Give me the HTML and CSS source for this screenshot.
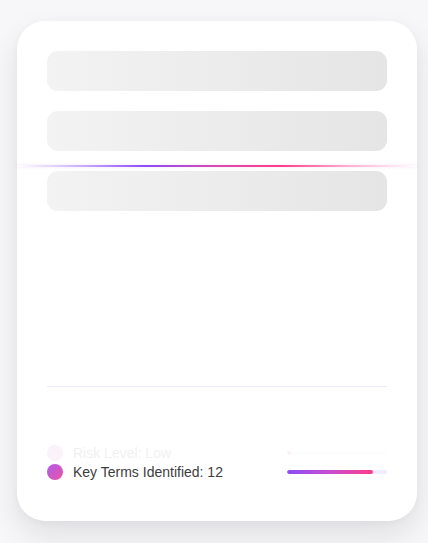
FILE: index.html
```html
<!DOCTYPE html>
<html>
<head>
<meta charset="utf-8">
<link rel="stylesheet" href="styles.css">
</head>
<body>
<div class="card">
  <div class="skeletons">
    <div class="skel"></div>
    <div class="skel"></div>
    <div class="skel"></div>
  </div>
  <div class="scanline"></div>
  <div class="divider"></div>
  <div class="rows">
    <div class="row faded">
      <span class="dot"></span>
      <span class="label">Risk Level: Low</span>
      <span class="track"><span class="fill" style="width:4%"></span></span>
    </div>
    <div class="row">
      <span class="dot"></span>
      <span class="label">Key Terms Identified: 12</span>
      <span class="track"><span class="fill" style="width:86%"></span></span>
    </div>
  </div>
</div>
</body>
</html>
```
FILE: styles.css
```css
html, body {
  margin: 0;
  padding: 0;
}
body {
  background: #f7f7f9;
  width: 428px;
  height: 543px;
  overflow: hidden;
  font-family: "Liberation Sans", Arial, sans-serif;
  padding-top: 21px;
  padding-left: 17px;
  box-sizing: border-box;
}
.card {
  position: relative;
  width: 400px;
  height: 500px;
  box-sizing: border-box;
  padding: 30px;
  background: #fff;
  border-radius: 28px;
  box-shadow: 0 14px 30px rgba(20, 20, 40, 0.1), 0 2px 8px rgba(20, 20, 40, 0.03);
  display: flex;
  flex-direction: column;
}
.skeletons {
  display: flex;
  flex-direction: column;
  gap: 20px;
}
.skel {
  height: 40px;
  border-radius: 11px;
  background: linear-gradient(90deg, #f3f3f4 0%, #e5e5e5 100%);
}
.scanline {
  position: absolute;
  left: 0;
  right: 0;
  top: 144px;
  height: 2px;
  background: linear-gradient(90deg, rgba(139, 92, 246, 0) 0%, rgba(139, 92, 246, 0.45) 15%, #8b4cf6 32%, #d84bb0 50%, #ff3d8a 66%, rgba(255, 61, 138, 0.4) 83%, rgba(255, 61, 138, 0) 100%);
  box-shadow: 0 0 3px rgba(200, 80, 230, 0.18);
}
.divider {
  margin-top: 175px;
  height: 1px;
  background: #efe7fc;
}
.rows {
  margin-top: 56px;
  display: flex;
  flex-direction: column;
}
.row {
  display: flex;
  align-items: center;
  height: 19px;
}
.dot {
  width: 16px;
  height: 16px;
  border-radius: 50%;
  background: linear-gradient(135deg, #b05cf0 0%, #e8559e 100%);
  flex: none;
}
.label {
  margin-left: 10px;
  font-size: 14px;
  color: #3d3d40;
  flex: 1;
}
.track {
  width: 100px;
  height: 4px;
  border-radius: 2px;
  background: #f1ecfd;
  overflow: hidden;
  display: block;
}
.fill {
  display: block;
  height: 100%;
  border-radius: 2px;
  background: linear-gradient(90deg, #8b4cf6 0%, #c84fd0 50%, #ff3d8a 100%);
}
.faded {
  opacity: 0.07;
}
```
